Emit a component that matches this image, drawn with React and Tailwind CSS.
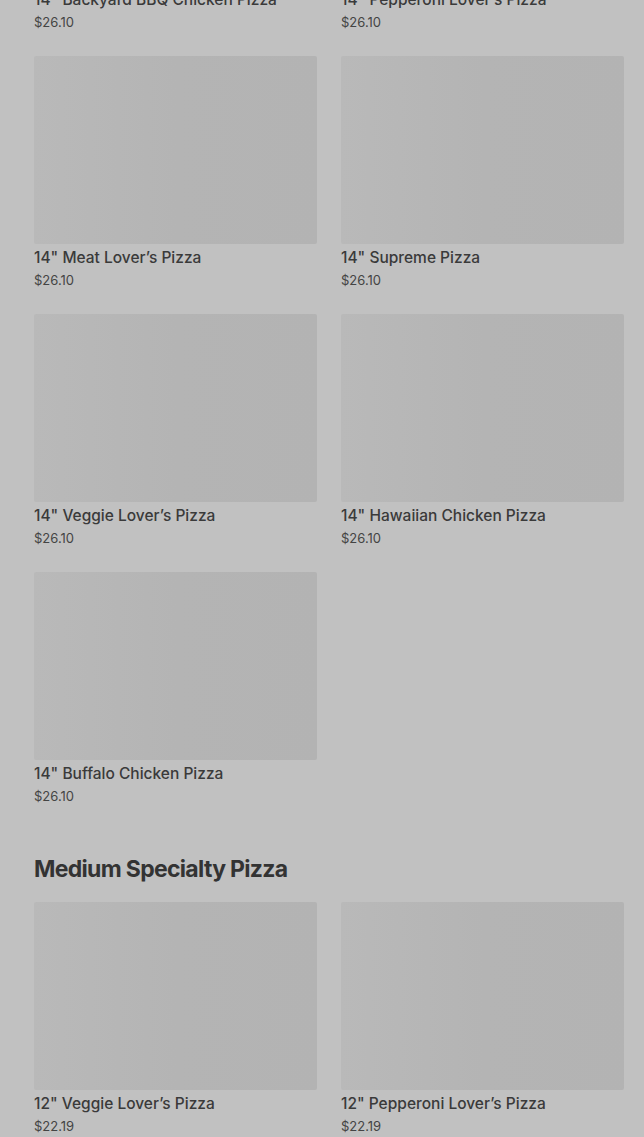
const large = [
  { name: '14" Backyard BBQ Chicken Pizza', price: '$26.10' },
  { name: '14" Pepperoni Lover\u2019s Pizza', price: '$26.10' },
  { name: '14" Meat Lover\u2019s Pizza', price: '$26.10' },
  { name: '14" Supreme Pizza', price: '$26.10' },
  { name: '14" Veggie Lover\u2019s Pizza', price: '$26.10' },
  { name: '14" Hawaiian Chicken Pizza', price: '$26.10' },
  { name: '14" Buffalo Chicken Pizza', price: '$26.10' },
];

const medium = [
  { name: '12" Veggie Lover\u2019s Pizza', price: '$22.19' },
  { name: '12" Pepperoni Lover\u2019s Pizza', price: '$22.19' },
];

function Card({ item }) {
  return (
    <div className="flex flex-col">
      <div className="h-[188px] rounded-[2px] bg-gradient-to-r from-[#b9b9b9] via-[#b4b4b4] to-[#b3b3b3]" />
      <div className="mt-[2px] text-[15.5px] leading-[24px] font-medium text-[#3a3a3a]">
        {item.name}
      </div>
      <div className="text-[13px] leading-[20px] text-[#444444]">{item.price}</div>
    </div>
  );
}

export default function App() {
  return (
    <div
      className="h-[1137px] overflow-hidden bg-[#c1c1c1]"
      style={{ fontFamily: 'Inter, "Noto Sans", sans-serif' }}
    >
      <div className="-mt-[202px] pl-[34px] pr-[20px]">
        <div className="grid grid-cols-2 gap-x-[24px] gap-y-[24px]">
          {large.map((it) => (
            <Card key={it.name} item={it} />
          ))}
        </div>

        <h2 className="mt-[47px] mb-[17px] text-[23px] leading-[32px] font-bold tracking-[-0.03em] text-[#333333]">
          Medium Specialty Pizza
        </h2>

        <div className="grid grid-cols-2 gap-x-[24px] gap-y-[24px]">
          {medium.map((it) => (
            <Card key={it.name} item={it} />
          ))}
        </div>
      </div>
    </div>
  );
}
